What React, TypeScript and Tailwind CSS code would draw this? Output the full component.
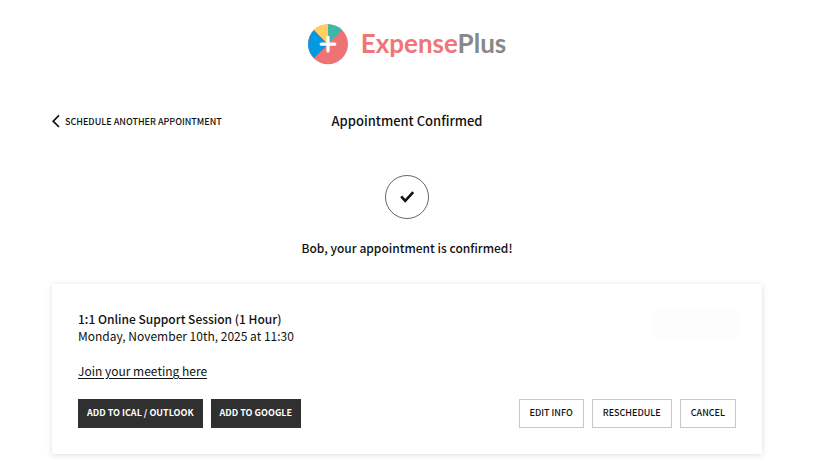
import { useState } from 'react';

interface Appointment {
  name: string;
  type: string;
  date: string;
}

const appointment: Appointment = {
  name: 'Bob',
  type: '1:1 Online Support Session (1 Hour)',
  date: 'Monday, November 10th, 2025 at 11:30',
};

const calendarActions = ['Add to iCal / Outlook', 'Add to Google'];
const manageActions = ['Edit info', 'Reschedule', 'Cancel'];

function Logo() {
  return (
    <div className="flex items-center justify-center gap-3">
      <svg width="41" height="41" viewBox="0 0 41 41" aria-hidden="true">
        <circle cx="20" cy="20.2" r="20" fill="#ee7374" />
        <path d="M20 20.2 L5.9 34.3 A20 20 0 0 1 5.9 6.1 Z" fill="#0299e2" />
        <path d="M20 20.2 L5.9 6.1 A20 20 0 0 1 20 0.2 Z" fill="#ffcf60" />
        <path d="M20 20.2 L20 0.2 A20 20 0 0 1 34.1 6.1 Z" fill="#3db7a9" />
        <path d="M20 13.4 V27 M13.2 20.2 H26.8" stroke="#fff" strokeWidth="3.2" strokeLinecap="round" />
      </svg>
      <span className="pb-1 font-['Lato',sans-serif] text-[26px] leading-8 font-bold text-[#f17577]">
        Expense<span className="text-[#888888]">Plus</span>
      </span>
    </div>
  );
}

export default function App() {
  const [cancelled, setCancelled] = useState(false);

  return (
    <main className="min-h-screen bg-white pr-1.5 font-['Noto_Sans_CJK_JP','Noto_Sans',sans-serif] text-xs leading-[17px] text-[#111111]">
      <div className="mx-auto max-w-[710px] pt-6 pb-4">
        <Logo />

        <header className="mt-11 grid grid-cols-[1fr_auto_1fr] items-center">
          <a href="#schedule" className="flex items-center gap-1 text-[9px] font-medium uppercase">
            <svg width="9" height="14" viewBox="0 0 9 14" fill="none" stroke="#111" strokeWidth="1.7" aria-hidden="true">
              <path d="M7 1.4 L1.2 7.2 L7 13" />
            </svg>
            Schedule another appointment
          </a>
          <h1 className="text-[13px] leading-6 font-medium">Appointment Confirmed</h1>
        </header>

        <section className="mt-[42px] flex flex-col items-center">
          <svg width="44" height="44" viewBox="0 0 44 44" fill="none" aria-hidden="true">
            <circle cx="22" cy="22" r="21.5" stroke="#666" />
            <path d="M16.2 21.4 L20.2 25.8 L28.2 17.2" stroke="#111" strokeWidth="2.7" />
          </svg>
          <p className="mt-5 font-medium">
            {appointment.name}, your appointment is {cancelled ? 'cancelled' : 'confirmed'}!
          </p>
        </section>

        <section className="mt-7 bg-white px-[26px] py-[26px] shadow-[0_1px_6px_rgba(0,0,0,0.14)]">
          <div className="flex items-start justify-between">
            <div>
              <h2 className="font-medium">{appointment.type}</h2>
              <p>{appointment.date}</p>
              <a href="#meeting" className="mt-[18px] inline-block underline underline-offset-2">
                Join your meeting here
              </a>
            </div>
            <div className="h-7 w-20 rounded-full bg-[#fdfdfd] shadow-[0_0_4px_4px_#fdfdfd]" />
          </div>

          <div className="mt-5 flex flex-wrap items-center justify-between gap-2">
            <div className="flex gap-2">
              {calendarActions.map(label => (
                <button
                  key={label}
                  className="h-[29px] bg-[#303030] px-[9px] pb-[3px] text-[9px] font-bold text-white uppercase"
                >
                  {label}
                </button>
              ))}
            </div>
            <div className="flex gap-2">
              {manageActions.map(label => (
                <button
                  key={label}
                  onClick={() => label === 'Cancel' && setCancelled(true)}
                  className="h-[29px] border border-[#c8c8c8] px-[10px] pb-[3px] text-[9px] font-medium uppercase"
                >
                  {label}
                </button>
              ))}
            </div>
          </div>
        </section>
      </div>
    </main>
  );
}
